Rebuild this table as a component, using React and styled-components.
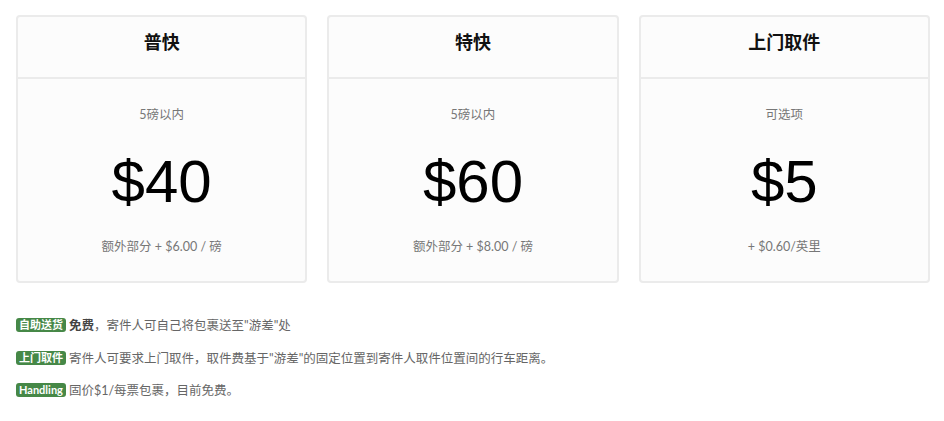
import React from "react";
import styled, { createGlobalStyle } from "styled-components";

const GlobalStyle = createGlobalStyle`
  html, body {
    margin: 0;
    padding: 0;
    background: #fff;
  }
  body {
    font-family: "Lato", "Noto Sans CJK SC", sans-serif;
    color: #333;
  }
`;

const plans = [
  { title: "普快", limit: "5磅以内", price: "$40", extra: "额外部分 + $6.00 / 磅" },
  { title: "特快", limit: "5磅以内", price: "$60", extra: "额外部分 + $8.00 / 磅" },
  { title: "上门取件", limit: "可选项", price: "$5", extra: "+ $0.60/英里" },
];

const notes = [
  { label: "自助送货", strong: "免费", text: '，寄件人可自己将包裹送至"游差"处' },
  { label: "上门取件", text: '寄件人可要求上门取件，取件费基于"游差"的固定位置到寄件人取件位置间的行车距离。' },
  { label: "Handling", text: "固价$1/每票包裹，目前免费。" },
];

const Page = styled.div`
  padding: 15px 14px 0 16px;
`;

const Grid = styled.div`
  display: grid;
  grid-template-columns: repeat(3, 1fr);
  gap: 20px;
`;

const Card = styled.div`
  display: flex;
  flex-direction: column;
  background: #fcfcfc;
  border: 2px solid #ebebeb;
  border-radius: 4px;
`;

const Header = styled.div`
  padding: 14px 0 26px;
  border-bottom: 2px solid #ebebeb;
  text-align: center;
  font-family: "Noto Sans CJK SC", sans-serif;
  font-weight: 700;
  font-size: 18px;
  line-height: 20px;
  color: #111;
`;

const Body = styled.div`
  display: flex;
  flex-direction: column;
  align-items: center;
  padding: 26px 0 24px;
`;

const Small = styled.div`
  font-family: "Lato", "Noto Sans CJK SC", sans-serif;
  font-size: 12.5px;
  line-height: 20px;
  color: #777;
  margin-top: ${(p) => p.$top || 0}px;
`;

const Price = styled.div`
  margin-top: 22px;
  font-family: "Liberation Sans", Arial, sans-serif;
  font-size: 60px;
  line-height: 70px;
  color: #000;
`;

const Notes = styled.div`
  display: flex;
  flex-direction: column;
  gap: 12.5px;
  margin-top: 33px;
`;

const Note = styled.p`
  margin: 0;
  font-family: "Lato", "Noto Sans CJK SC", sans-serif;
  font-size: 12.5px;
  line-height: 20px;
  color: #666;

  strong {
    color: #444;
    font-weight: 700;
  }
`;

const Label = styled.span`
  display: inline-block;
  margin-right: 3px;
  padding: 0 3px;
  border-radius: 3px;
  background: #468847;
  color: #fff;
  font-family: "Lato", "Noto Sans CJK SC", sans-serif;
  font-weight: 700;
  font-size: 11px;
  line-height: 14px;
  vertical-align: 1px;
`;

export default function App() {
  return (
    <Page>
      <GlobalStyle />
      <Grid>
        {plans.map((p) => (
          <Card key={p.title}>
            <Header>{p.title}</Header>
            <Body>
              <Small>{p.limit}</Small>
              <Price>{p.price}</Price>
              <Small $top={20}>{p.extra}</Small>
            </Body>
          </Card>
        ))}
      </Grid>
      <Notes>
        {notes.map((n) => (
          <Note key={n.label}>
            <Label>{n.label}</Label>
            {n.strong && <strong>{n.strong}</strong>}
            {n.text}
          </Note>
        ))}
      </Notes>
    </Page>
  );
}
